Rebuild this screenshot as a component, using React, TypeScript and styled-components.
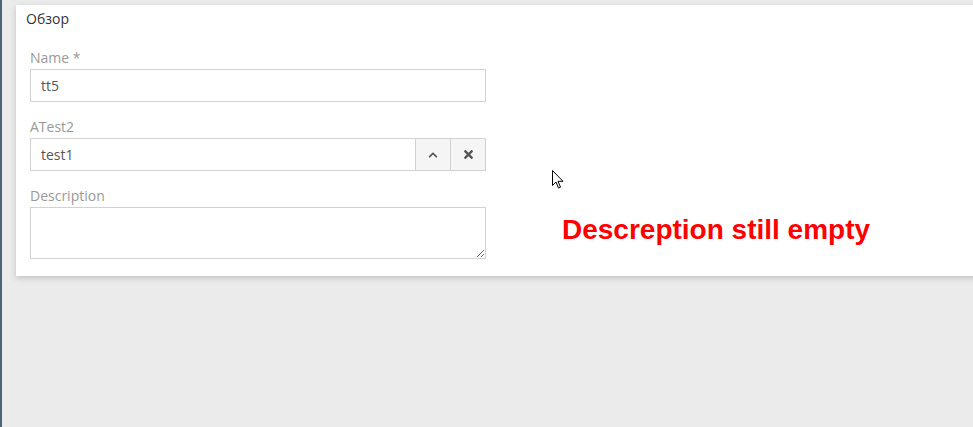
import styled, {createGlobalStyle} from 'styled-components';
import {FaChevronUp, FaTimes} from 'react-icons/fa';

const FIELD_WIDTH = 456;

const App = () => {
  return (
    <>
      <GlobalStyle />
      <Page>
        <SideBar />
        <Main>
          <Card>
            <CardTitle>Обзор</CardTitle>
            <CardBody>
              <Form>
                <Field>
                  <Label>Name *</Label>
                  <TextInput defaultValue="tt5" />
                </Field>
                <Field>
                  <Label>ATest2</Label>
                  <InputGroup>
                    <GroupInput defaultValue="test1" />
                    <AddonButton>
                      <FaChevronUp size={10} />
                    </AddonButton>
                    <AddonButton>
                      <FaTimes size={13} />
                    </AddonButton>
                  </InputGroup>
                </Field>
                <Field last>
                  <Label>Description</Label>
                  <TextArea />
                </Field>
              </Form>
              <Note>Descreption still empty</Note>
            </CardBody>
            <Cursor width="12" height="19" viewBox="0 0 12 19">
              <path
                d="M0.5 0.5 L0.5 15.5 L4 12 L6.5 18 L8.5 17.2 L6 11.3 L11 11.3 Z"
                fill="#fff"
                stroke="#000"
                strokeWidth="1"
                strokeLinejoin="miter"
              />
            </Cursor>
          </Card>
        </Main>
      </Page>
    </>
  );
};

const GlobalStyle = createGlobalStyle`
  html, body {
    margin: 0;
    padding: 0;
    background: #ebebeb;
    font-family: 'Open Sans', 'Noto Sans', sans-serif;
    font-size: 14px;
  }
`;

const Page = styled.div`
  display: flex;
  width: 973px;
  height: 427px;
  overflow: hidden;
  background: #ebebeb;
`;

const SideBar = styled.div`
  width: 2px;
  flex-shrink: 0;
  background: #4b6476;
`;

const Main = styled.div`
  flex: 1;
  padding: 5px 0 0 14px;
`;

const Card = styled.div`
  position: relative;
  background: #fff;
  width: 980px;
  padding: 4px 10px 17px;
  box-sizing: border-box;
  box-shadow: 0 2px 6px rgba(0, 0, 0, 0.18);
`;

const CardTitle = styled.div`
  color: #333;
  line-height: 20px;
  margin-bottom: 19px;
`;

const CardBody = styled.div`
  display: flex;
  padding-left: 4px;
`;

const Form = styled.div`
  width: ${FIELD_WIDTH}px;
  flex-shrink: 0;
`;

const Field = styled.div<{last?: boolean}>`
  margin-bottom: ${({last}) => (last ? 0 : 15)}px;
`;

const Label = styled.div`
  color: #999;
  line-height: 20px;
  margin-bottom: 1px;
`;

const TextInput = styled.input`
  display: block;
  width: 100%;
  height: 33px;
  box-sizing: border-box;
  border: 1px solid #d2d2d2;
  padding: 0 10px;
  font-family: inherit;
  font-size: 14px;
  color: #555;
  outline: none;
`;

const InputGroup = styled.div`
  display: flex;
  height: 33px;
  border: 1px solid #d2d2d2;
  box-sizing: border-box;
`;

const GroupInput = styled.input`
  flex: 1;
  min-width: 0;
  border: none;
  padding: 0 10px;
  font-family: inherit;
  font-size: 14px;
  color: #555;
  outline: none;
`;

const AddonButton = styled.div`
  width: 34px;
  display: flex;
  align-items: center;
  justify-content: center;
  background: #f5f5f5;
  border-left: 1px solid #d2d2d2;
  color: #555;
`;

const TextArea = styled.textarea`
  display: block;
  width: 100%;
  height: 52px;
  box-sizing: border-box;
  border: 1px solid #d2d2d2;
  resize: vertical;
  outline: none;
  font-family: inherit;
`;

const Note = styled.div`
  align-self: flex-end;
  margin: 0 0 13px 76px;
  color: #ff0000;
  font-family: 'Liberation Sans', Arial, sans-serif;
  font-weight: bold;
  font-size: 28px;
  line-height: 32px;
  white-space: nowrap;
`;

const Cursor = styled.svg`
  position: absolute;
  left: 536px;
  top: 165px;
`;

export default App;
